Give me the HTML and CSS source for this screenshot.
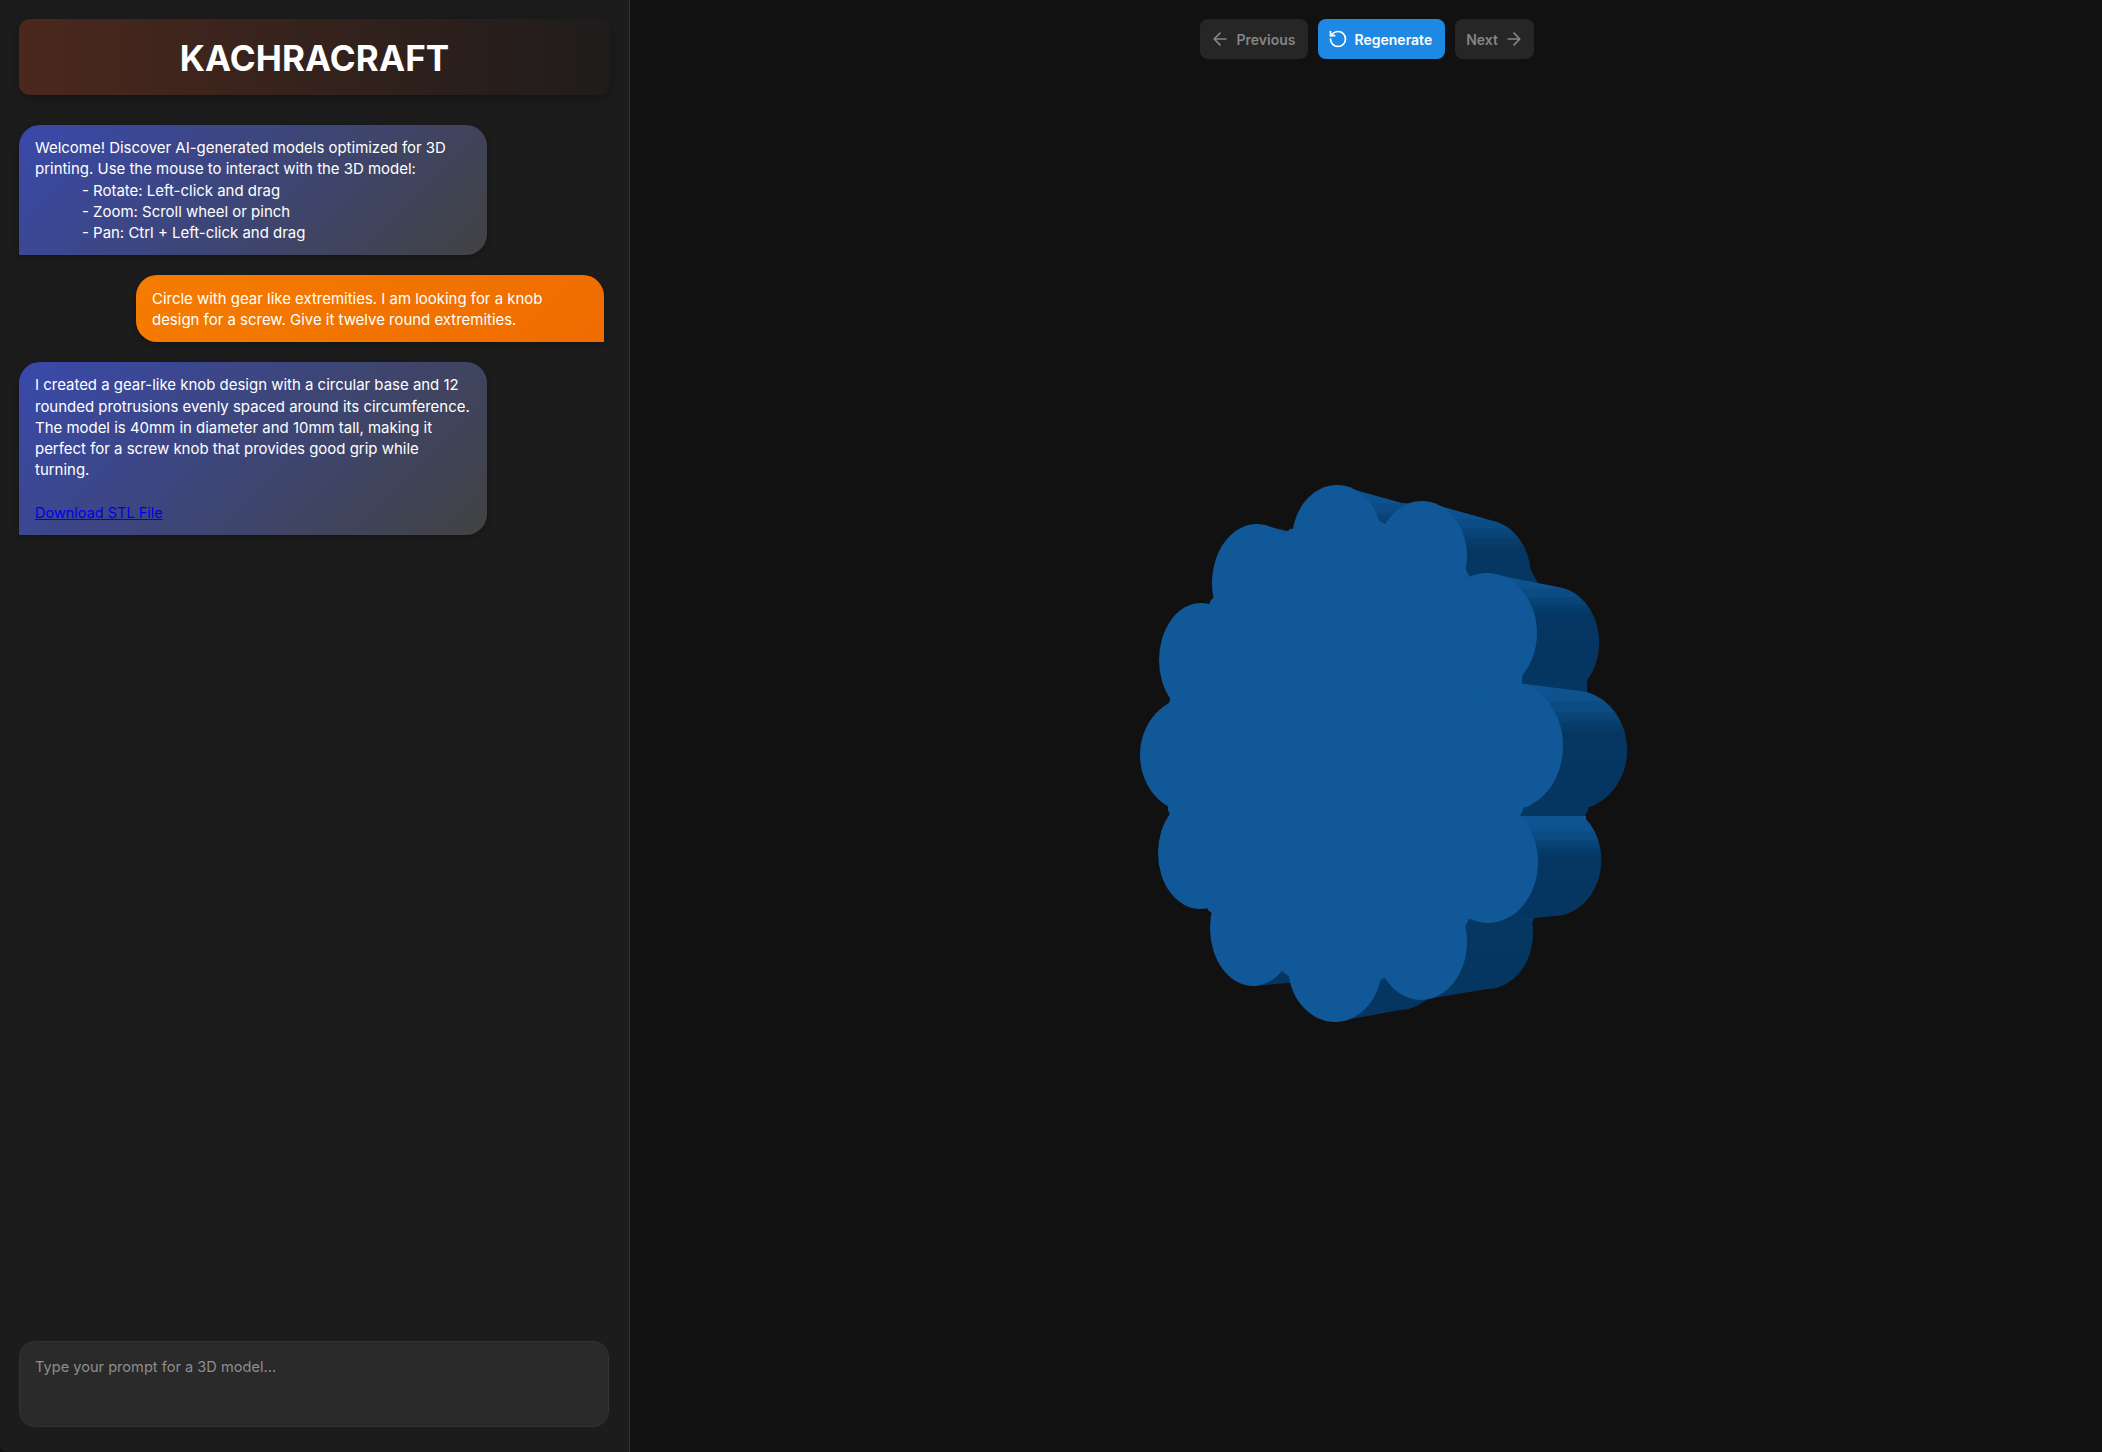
FILE: index.html
```html
<!DOCTYPE html>
<html lang="en">
<head>
<meta charset="utf-8">
<title>Kachracraft</title>
<link rel="stylesheet" href="styles.css">
</head>
<body>
<div class="app">
  <aside class="sidebar">
    <header class="brand"><h1>KACHRACRAFT</h1></header>
    <section class="messages">
      <div class="bubble bot">Welcome! Discover AI-generated models optimized for 3D printing. Use the mouse to interact with the 3D model:
        <span class="hint">- Rotate: Left-click and drag</span>
        <span class="hint">- Zoom: Scroll wheel or pinch</span>
        <span class="hint">- Pan: Ctrl + Left-click and drag</span>
      </div>
      <div class="bubble user">Circle with gear like extremities. I am looking for a knob design for a screw. Give it twelve round extremities.</div>
      <div class="bubble bot">I created a gear-like knob design with a circular base and 12 rounded protrusions evenly spaced around its circumference. The model is 40mm in diameter and 10mm tall, making it perfect for a screw knob that provides good grip while turning.
        <a class="download" href="#">Download STL File</a>
      </div>
    </section>
    <textarea class="prompt" placeholder="Type your prompt for a 3D model..."></textarea>
  </aside>
  <main class="viewer">
    <nav class="controls">
      <button class="btn muted lead"><svg class="ico" viewBox="0 0 24 24"><path d="M19 12H5M12 19l-7-7 7-7"/></svg>Previous</button>
      <button class="btn primary lead"><svg class="ico" viewBox="0 0 24 24"><path d="M3 12a9 9 0 1 0 9-9 9.75 9.75 0 0 0-6.74 2.74L3 8"/><path d="M3 3v5h5"/></svg>Regenerate</button>
      <button class="btn muted trail">Next<svg class="ico" viewBox="0 0 24 24"><path d="M5 12h14M12 5l7 7-7 7"/></svg></button>
    </nav>
    <svg class="model" viewBox="630 0 1472 1452" xmlns="http://www.w3.org/2000/svg">
      <defs>
        <linearGradient id="side" x1="0" y1="0" x2="0" y2="1">
          <stop offset="0" stop-color="#0e5593"/>
          <stop offset="0.14" stop-color="#0d518d"/>
          <stop offset="0.14" stop-color="#0c4d87"/>
          <stop offset="0.22" stop-color="#0b4a82"/>
          <stop offset="0.22" stop-color="#09467b"/>
          <stop offset="0.29" stop-color="#084274"/>
          <stop offset="0.29" stop-color="#073e6d"/>
          <stop offset="0.36" stop-color="#063a68"/>
          <stop offset="0.36" stop-color="#053762"/>
          <stop offset="1" stop-color="#053561"/>
        </linearGradient>
      </defs>
      <polygon class="side-flat" points="1355,529 1443,525 1531,570 1587,676 1588,810 1531,925 1443,975 1353,976 1273,912 1233,810 1233,705 1276,601"/>
      <g fill="url(#side)">
        <path d="M1257,524 L1300,534 A45 55 0 0 1 1300,640 L1257,640 Z"/>
        <path d="M1337,485 L1402,503 A46 55 0 0 1 1402,613 L1337,595 Z"/>
        <path d="M1422,501 L1497,522 A46 55 0 0 1 1486,630 L1422,611 Z"/>
        <path d="M1487,573 L1563,588 A46 56 0 0 1 1585,683 L1522,676 Z"/>
        <path d="M1510,682 L1587,692 A54 60 0 0 1 1587,808 L1510,818 Z"/>
        <path d="M1253,870 L1300,870 A45 56 0 0 1 1300,982 L1253,986 Z"/>
        <path d="M1335,900 L1400,900 A45 55 0 0 1 1400,1010 L1335,1022 Z"/>
        <path d="M1421,884 L1487,877 A46 56 0 0 1 1487,989 L1421,1000 Z"/>
        <path d="M1488,816 L1586,816 L1586,819 A48 56 0 0 1 1553,916 L1488,923 Z"/>
      </g>
      <g class="front">
        <polygon points="1290,529 1378,520 1466,570 1522,676 1523,810 1466,925 1378,982 1288,976 1208,910 1168,810 1168,705 1211,600"/>
        <ellipse cx="1337" cy="540" rx="45" ry="55"/>
        <ellipse cx="1422" cy="556" rx="45" ry="55"/>
        <ellipse cx="1487" cy="633" rx="50" ry="60"/>
        <ellipse cx="1510" cy="746" rx="53" ry="64"/>
        <ellipse cx="1488" cy="862" rx="50" ry="61"/>
        <ellipse cx="1421" cy="942" rx="46" ry="58"/>
        <ellipse cx="1335" cy="966" rx="47" ry="56"/>
        <ellipse cx="1253" cy="928" rx="43" ry="58"/>
        <ellipse cx="1200" cy="853" rx="42" ry="56"/>
        <ellipse cx="1192" cy="755" rx="52" ry="58"/>
        <ellipse cx="1201" cy="660" rx="42" ry="57"/>
        <ellipse cx="1257" cy="583" rx="45" ry="59"/>
      </g>
    </svg>
  </main>
</div>
</body>
</html>
```
FILE: styles.css
```css
* { box-sizing: border-box; }
html, body { margin: 0; height: 100%; background: #111111; }
body { font-family: "Inter", "Liberation Sans", sans-serif; color: #fff; overflow: hidden; }
.app { display: flex; height: 1452px; }
.sidebar {
  width: 630px; flex: none; display: flex; flex-direction: column;
  padding: 19px 19px 25px; background: #1c1c1c;
  border-right: 1px solid #333; border-bottom-left-radius: 8px;
}
.brand {
  height: 76px; flex: none; display: flex; align-items: center; justify-content: center;
  padding-top: 3px;
  border-radius: 11px; background: linear-gradient(90deg, #4b281d 0%, #1f1c1b 100%);
  box-shadow: 0 3px 8px rgba(0,0,0,.3);
}
.brand h1 { margin: 0; font-size: 35px; font-weight: 700; letter-spacing: .1px; line-height: 1; }
.messages { flex: 1; display: flex; flex-direction: column; gap: 20px; padding-top: 30px; align-items: flex-start; }
.bubble {
  width: 468px; padding: 13.2px 14px 11.2px 16px; font-size: 14.96px; line-height: 21.2px;
  border-radius: 21px; box-shadow: 0 2px 6px rgba(0,0,0,.3);
}
.bot { background: linear-gradient(135deg, #3949ab, #424242); border-bottom-left-radius: 0; }
.user { background: linear-gradient(135deg, #f57c00, #ef6c00); border-bottom-right-radius: 0; align-self: flex-end; margin-right: 6px; }
.hint { display: block; padding-left: 47px; }
.download { display: block; margin-top: 20.4px; padding-bottom: .8px; font-size: 14.5px; color: #0000ee; text-decoration: underline; }
.prompt {
  width: 590px; height: 86px; flex: none; resize: none; outline: none;
  padding: 15px 15px 13px; font: 14.6px/21px "Inter", "Liberation Sans", sans-serif; color: #fff;
  background: #2a2a2a; border: 1px solid #333; border-radius: 16px;
}
.prompt::placeholder { color: #8e8e8e; }
.viewer { flex: 1; position: relative; display: flex; flex-direction: column; align-items: center; padding-top: 19px; }
.controls { display: flex; gap: 10px; position: relative; z-index: 1; left: 1px; }
.btn {
  height: 40px; display: flex; align-items: center; gap: 6.5px; padding: 0 12px;
  border: 0; border-radius: 8px; font: 600 14px "Inter", "Liberation Sans", sans-serif;
}
.lead { padding-left: 10.5px; }
.trail { padding-left: 11px; padding-right: 10px; }
.muted { background: #262626; color: #858585; }
.primary { background: #1e88e5; color: #fff; padding-right: 13px; }
.ico { width: 20px; height: 20px; fill: none; stroke: currentColor; stroke-width: 2; stroke-linecap: round; stroke-linejoin: round; }
.model { position: absolute; left: 0; top: 0; width: 1472px; height: 1452px; }
.side-flat { fill: #053561; }
.front { fill: #105897; }
```
